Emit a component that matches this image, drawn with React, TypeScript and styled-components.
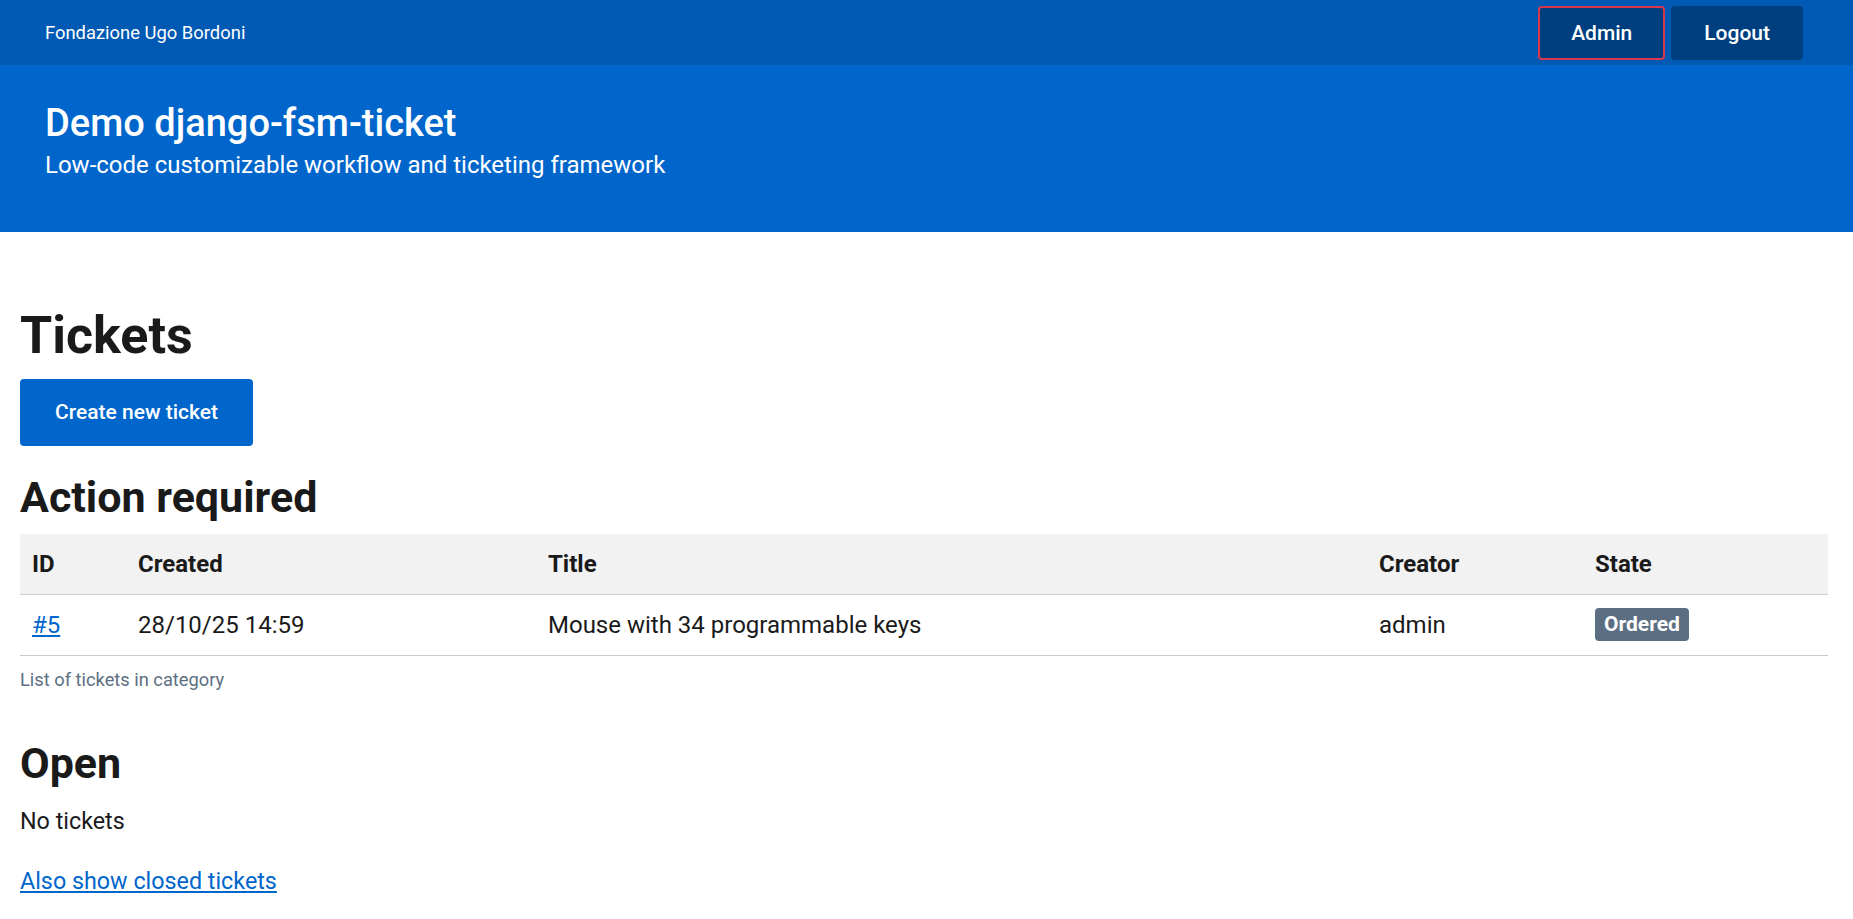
import styled, { createGlobalStyle } from 'styled-components'

const GlobalStyle = createGlobalStyle`
body {
  margin: 0;
  background: #ffffff;
  color: #1a1a1a;
  font-family: Roboto, "Noto Sans", Arial, sans-serif;
}
`

const tickets = [
  { id: 5, created: '28/10/25 14:59', title: 'Mouse with 34 programmable keys', creator: 'admin', state: 'Ordered' },
]

const columns = [
  { label: 'ID', width: 106 },
  { label: 'Created', width: 410 },
  { label: 'Title', width: 831 },
  { label: 'Creator', width: 216 },
  { label: 'State', width: 245 },
]

const App = () => {
  return (
    <div>
      <GlobalStyle />
      <SlimBar>
        <Brand>Fondazione Ugo Bordoni</Brand>
        <SlimActions>
          <SlimButton focused>Admin</SlimButton>
          <SlimButton>Logout</SlimButton>
        </SlimActions>
      </SlimBar>
      <CenterHeader>
        <SiteTitle>Demo django-fsm-ticket</SiteTitle>
        <SiteTagline>Low-code customizable workflow and ticketing framework</SiteTagline>
      </CenterHeader>

      <Main>
        <PageTitle>Tickets</PageTitle>
        <PrimaryButton>Create new ticket</PrimaryButton>

        <SectionTitle>Action required</SectionTitle>
        <Table>
          <thead>
            <tr>
              {columns.map((c) => (
                <Th key={c.label} w={c.width}>{c.label}</Th>
              ))}
            </tr>
          </thead>
          <tbody>
            {tickets.map((t) => (
              <tr key={t.id}>
                <Td><TextLink href="#">#{t.id}</TextLink></Td>
                <Td>{t.created}</Td>
                <Td>{t.title}</Td>
                <Td>{t.creator}</Td>
                <Td><Badge>{t.state}</Badge></Td>
              </tr>
            ))}
          </tbody>
        </Table>
        <Caption>List of tickets in category</Caption>

        <SectionTitle spaced>Open</SectionTitle>
        <Empty>No tickets</Empty>

        <FooterLink>
          <TextLink href="#">Also show closed tickets</TextLink>
        </FooterLink>
      </Main>
    </div>
  )
}

export default App


const SlimBar = styled.div`
height: 65px;
background-color: #0059b3;
display: flex;
align-items: center;
justify-content: space-between;
padding: 0 50px 0 45px;
`;

const Brand = styled.div`
color: #ffffff;
font-size: 18.4px;
font-weight: 400;
`;

const SlimActions = styled.div`
display: flex;
gap: 6px;
`;

const SlimButton = styled.button<{ focused?: boolean }>`
height: 54px;
padding: 0 ${(p) => (p.focused ? '31px' : '33px')};
background-color: #003f7f;
color: #ffffff;
border: ${(p) => (p.focused ? '2px solid #d9364f' : 'none')};
border-radius: 4px;
font-family: Roboto, "Noto Sans", Arial, sans-serif;
font-size: 21px;
font-weight: 500;
cursor: pointer;
`;

const CenterHeader = styled.div`
background-color: #0066cc;
color: #ffffff;
padding: 36px 45px 50px;
`;

const SiteTitle = styled.div`
font-size: 38px;
font-weight: 500;
line-height: 1.2;
`;

const SiteTagline = styled.div`
margin-top: 2px;
font-size: 24px;
line-height: 1.4;
`;

const Main = styled.div`
padding: 0 25px 40px 20px;
`;

const PageTitle = styled.h1`
margin: 73px 0 0;
font-size: 52px;
font-weight: 700;
line-height: 1.2;
`;

const PrimaryButton = styled.button`
margin-top: 11px;
height: 67px;
padding: 0 35px;
background-color: #0066cc;
color: #ffffff;
border: none;
border-radius: 4px;
font-family: Roboto, "Noto Sans", Arial, sans-serif;
font-size: 21px;
font-weight: 500;
cursor: pointer;
`;

const SectionTitle = styled.h2<{ spaced?: boolean }>`
margin: ${(p) => (p.spaced ? '45px' : '26px')} 0 0;
font-size: 43px;
font-weight: 700;
line-height: 1.2;
`;

const Table = styled.table`
margin-top: 11px;
width: 1808px;
border-collapse: collapse;
table-layout: fixed;
font-size: 24px;
`;

const Th = styled.th<{ w: number }>`
box-sizing: border-box;
width: ${(p) => p.w}px;
height: 60px;
padding: 0 12px;
background-color: #f2f2f2;
border-bottom: 1px solid #cccccc;
text-align: left;
font-weight: 700;
`;

const Td = styled.td`
height: 60px;
padding: 0 12px;
border-bottom: 1px solid #cccccc;
vertical-align: middle;
`;

const TextLink = styled.a`
color: #0066cc;
text-decoration: underline;
`;

const Badge = styled.span`
display: inline-block;
height: 33px;
line-height: 33px;
padding: 0 9px;
background-color: #5c6f82;
color: #ffffff;
border-radius: 4px;
font-size: 21px;
font-weight: 700;
`;

const Caption = styled.div`
margin-top: 10px;
color: #5c6f82;
font-size: 18.3px;
line-height: 1.5;
`;

const Empty = styled.p`
margin: 14px 0 0;
font-size: 23.3px;
line-height: 1.5;
`;

const FooterLink = styled.p`
margin: 25px 0 0;
font-size: 23.3px;
line-height: 1.5;
`;
